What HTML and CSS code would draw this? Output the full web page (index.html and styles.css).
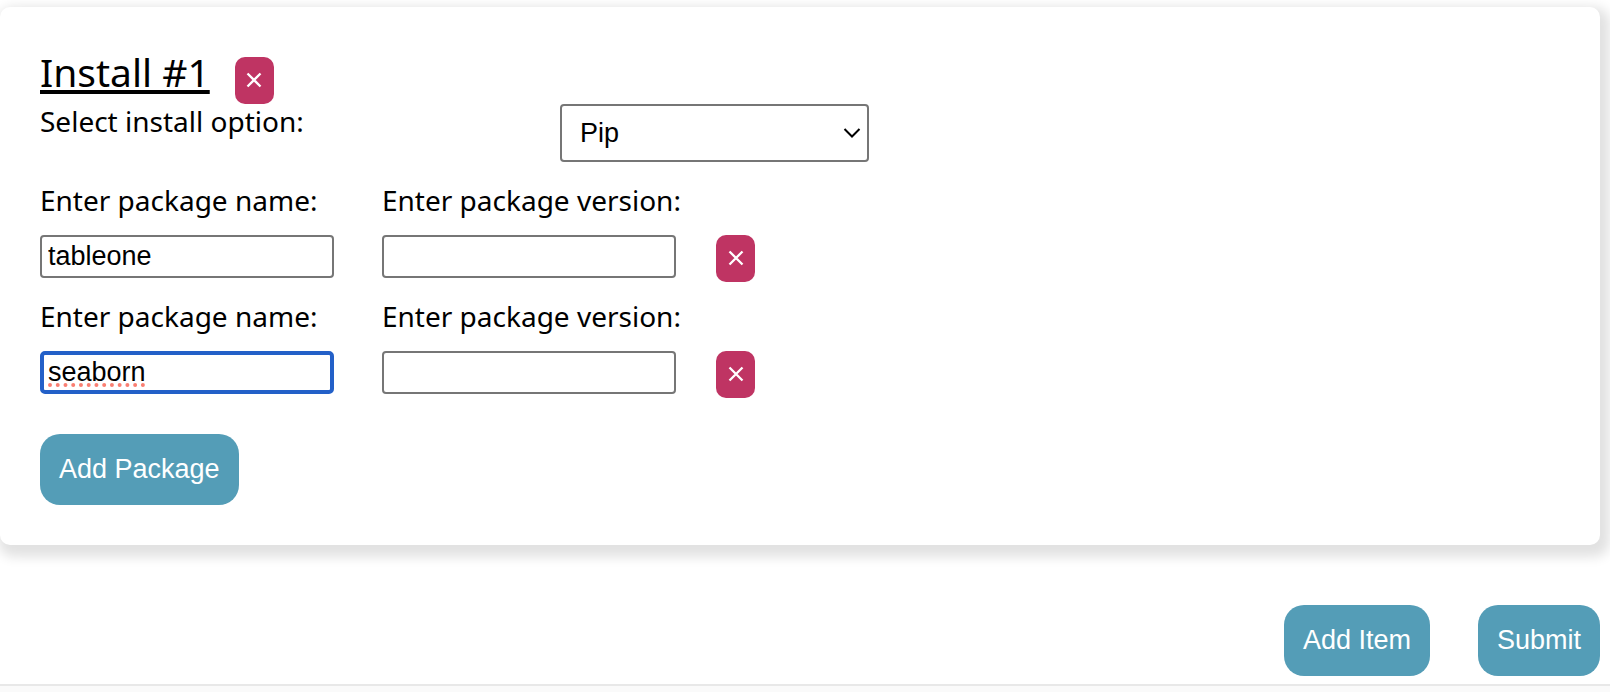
FILE: index.html
```html
<!DOCTYPE html>
<html lang="en">
<head>
<meta charset="utf-8">
<title>Install packages</title>
<link rel="stylesheet" href="styles.css">
</head>
<body>
<form class="page">
  <section class="card">
    <header class="card-head">
      <h2 class="title">Install #1</h2>
      <button class="remove" type="button" aria-label="Remove install"><svg class="cross" viewBox="0 0 16 16"><path d="M1.5 1.5 14.5 14.5M14.5 1.5 1.5 14.5"/></svg></button>
    </header>
    <div class="option">
      <label class="label" for="option">Select install option:</label>
      <div class="select-box">
        <select class="select" id="option"><option>Pip</option></select>
        <svg class="chevron" viewBox="0 0 18 12"><path d="M1.5 2 9 9.5 16.5 2"/></svg>
      </div>
    </div>
    <div class="packages">
      <div class="package">
        <div class="field">
          <label class="label" for="name1">Enter package name:</label>
          <input class="input" id="name1" type="text" value="tableone">
        </div>
        <div class="field">
          <label class="label" for="version1">Enter package version:</label>
          <input class="input" id="version1" type="text">
        </div>
        <button class="remove" type="button" aria-label="Remove package"><svg class="cross" viewBox="0 0 16 16"><path d="M1.5 1.5 14.5 14.5M14.5 1.5 1.5 14.5"/></svg></button>
      </div>
      <div class="package">
        <div class="field">
          <label class="label" for="name2">Enter package name:</label>
          <input class="input active" id="name2" type="text" value="seaborn">
        </div>
        <div class="field">
          <label class="label" for="version2">Enter package version:</label>
          <input class="input" id="version2" type="text">
        </div>
        <button class="remove" type="button" aria-label="Remove package"><svg class="cross" viewBox="0 0 16 16"><path d="M1.5 1.5 14.5 14.5M14.5 1.5 1.5 14.5"/></svg></button>
      </div>
    </div>
    <button class="action" type="button">Add Package</button>
  </section>
  <div class="actions">
    <button class="action" type="button">Add Item</button>
    <button class="action" type="submit">Submit</button>
  </div>
</form>
<footer class="footer"></footer>
</body>
</html>
```
FILE: styles.css
```css
* { box-sizing: border-box; }
html { height: 100%; }
body {
  margin: 0;
  min-height: 100%;
  display: flex;
  flex-direction: column;
  overflow-x: hidden;
  background: #fff;
  color: #000;
  font-family: "Noto Sans", sans-serif;
  font-size: 28px;
}
.page { padding: 7px 10px 8px 0; }
.card {
  padding: 40px;
  border-radius: 10px;
  background: #fff;
  box-shadow: 4px 6px 12px 6px #e2e2e2;
}
.card-head {
  display: flex;
  align-items: flex-end;
  gap: 25px;
  height: 57px;
}
.title {
  margin: 0;
  font-size: 39px;
  font-weight: 400;
  line-height: 64px;
  text-decoration: underline;
  text-decoration-thickness: 4px;
  text-underline-offset: 3px;
  text-decoration-skip-ink: none;
}
.label { line-height: 34px; white-space: nowrap; }
.option {
  display: grid;
  grid-template-columns: 520px 309px;
  align-items: start;
}
.select-box { position: relative; }
.select {
  display: block;
  width: 100%;
  height: 58px;
  padding: 0 18px;
  appearance: none;
  border: 2px solid #767676;
  border-radius: 4px;
  background: #fff;
  color: #000;
  font: 27px "Liberation Sans", Arial, sans-serif;
}
.chevron {
  position: absolute;
  right: 8px;
  top: 23px;
  width: 18px;
  height: 12px;
  fill: none;
  stroke: #000;
  stroke-width: 2;
  pointer-events: none;
}
.packages {
  display: grid;
  gap: 17px;
  margin: 21px 0 36px;
}
.package {
  display: grid;
  grid-template-columns: 294px 294px auto;
  justify-content: start;
  column-gap: 48px;
}
.package .remove { align-self: end; margin-left: -8px; }
.field {
  display: flex;
  flex-direction: column;
  gap: 18px;
  padding-bottom: 4px;
}
.input {
  width: 100%;
  height: 43px;
  padding: 0 6px;
  border: 2px solid #767676;
  border-radius: 4px;
  outline: none;
  background: #fff;
  color: #000;
  font: 27px "Liberation Sans", Arial, sans-serif;
}
.input.active {
  padding: 0 4px;
  border: 4px solid #2360c8;
  border-radius: 5px;
  text-decoration: underline dotted #fa7f72 4px;
  text-underline-offset: 2px;
}
.remove {
  display: flex;
  align-items: center;
  justify-content: center;
  width: 39px;
  height: 47px;
  padding: 0 0 2px;
  border: 0;
  border-radius: 10px;
  background: #bf3463;
}
.cross {
  width: 16px;
  height: 16px;
  fill: none;
  stroke: #fff;
  stroke-width: 2.3;
}
.action {
  display: block;
  height: 71px;
  padding: 0 19px;
  border: 0;
  border-radius: 20px;
  background: #549db7;
  color: #fff;
  font: 27px "Liberation Sans", Arial, sans-serif;
}
.actions {
  display: flex;
  justify-content: flex-end;
  gap: 48px;
  margin-top: 60px;
}
.footer {
  flex: 1;
  min-height: 8px;
  border-top: 2px solid #e8e8e8;
  background: #fafafa;
}
```
